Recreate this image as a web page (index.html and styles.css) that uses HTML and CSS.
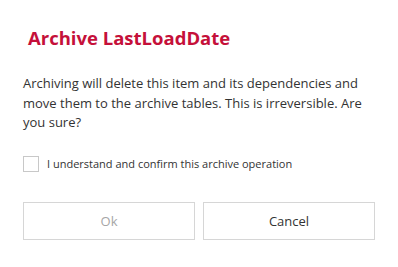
FILE: index.html
```html
<!DOCTYPE html>
<html>
<head>
<meta charset="utf-8">
<link rel="stylesheet" href="styles.css">
</head>
<body>
<div class="dialog">
  <h1 class="title">Archive LastLoadDate</h1>
  <p class="message">Archiving will delete this item and its dependencies and move them to the archive tables. This is irreversible. Are you sure?</p>
  <label class="confirm">
    <span class="box"></span>
    <span class="confirm-text">I understand and confirm this archive operation</span>
  </label>
  <div class="actions">
    <button class="btn btn-disabled">Ok</button>
    <button class="btn">Cancel</button>
  </div>
</div>
</body>
</html>
```
FILE: styles.css
```css
html, body {
  margin: 0;
  padding: 0;
  background: #fff;
}
body {
  font-family: "Open Sans", "Noto Sans", sans-serif;
  color: #333;
}
.dialog {
  width: 398px;
  height: 267px;
  box-sizing: border-box;
  padding: 26px 23px 0 23px;
}
.title {
  margin: 0 0 0 5px;
  font-size: 18.5px;
  font-weight: 700;
  line-height: 24px;
  color: #c5103a;
}
.message {
  margin: 24px 0 0 0;
  font-size: 13px;
  line-height: 19.5px;
  color: #333;
}
.confirm {
  display: flex;
  align-items: center;
  margin-top: 23px;
  gap: 8px;
  height: 16px;
}
.box {
  width: 14px;
  height: 14px;
  border: 1px solid #c8c8c8;
  flex: none;
}
.confirm-text {
  font-size: 11px;
  color: #333;
}
.actions {
  display: flex;
  gap: 8px;
  margin-top: 30px;
  width: 352px;
}
.btn {
  flex: 1;
  box-sizing: border-box;
  height: 38px;
  background: #fff;
  border: 1px solid #d6d6d6;
  font-family: "Open Sans", "Noto Sans", sans-serif;
  font-size: 13px;
  color: #333;
  padding: 0;
}
.btn-disabled {
  color: #a6a6a6;
}
```
